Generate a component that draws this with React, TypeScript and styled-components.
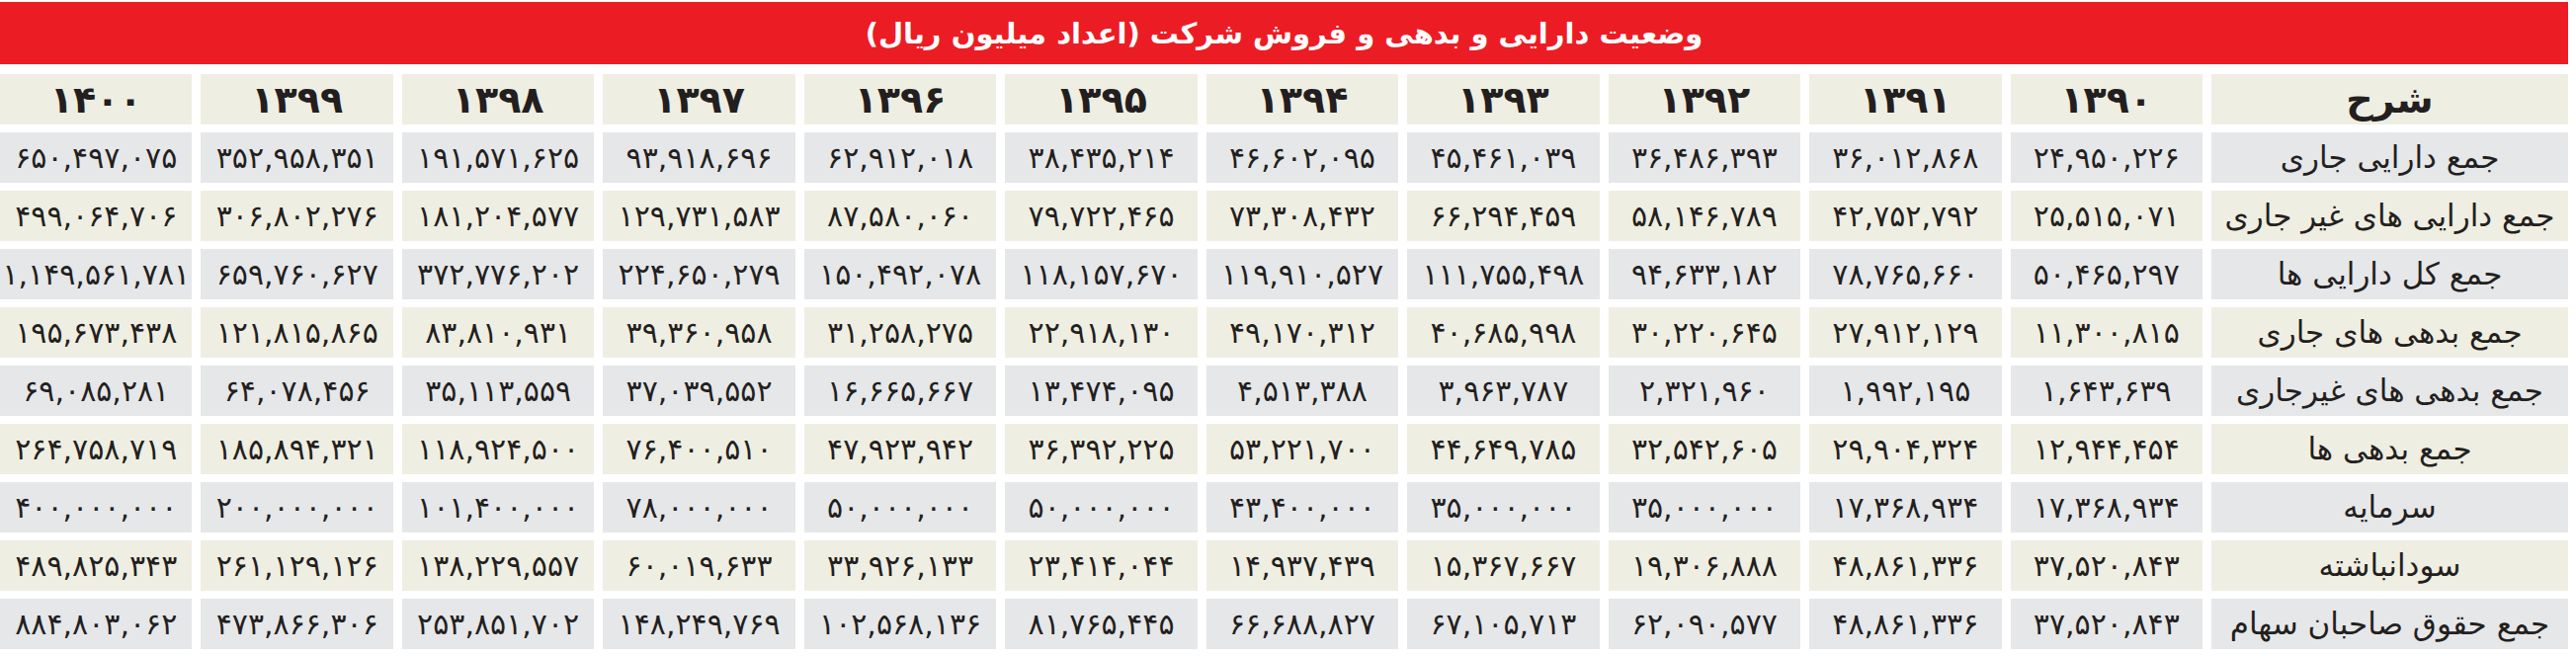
import React from "react";
import styled, { createGlobalStyle } from "styled-components";

const GlobalStyle = createGlobalStyle`
    body {
        margin: 0;
        background: #ffffff;
        font-family: "DejaVu Sans", "Noto Sans", sans-serif;
    }
`;

const Page = styled.div`
    width: 2599px;
    padding-top: 2px;
    direction: rtl;
    color: #231f20;
`;

const TitleBar = styled.div`
    height: 63px;
    background: #ec1c24;
    display: flex;
    align-items: center;
    justify-content: center;
    color: #ffffff;
    font-size: 29px;
    font-weight: bold;
    margin-bottom: 10px;
`;

const Table = styled.div`
    display: grid;
    grid-template-columns: 361px repeat(11, 1fr);
    grid-auto-rows: 51px;
    column-gap: 9px;
    row-gap: 8px;
`;

const Cell = styled.div<{ $tone: "beige" | "gray" }>`
    background: ${({ $tone }) => ($tone === "beige" ? "#efeee2" : "#e6e7e9")};
    display: flex;
    align-items: center;
    justify-content: center;
    white-space: nowrap;
    line-height: 1;
    overflow: hidden;
`;

const HeadCell = styled(Cell)`
    font-size: 38px;
    font-weight: bold;
`;

const LabelCell = styled(Cell)`
    font-size: 31px;
`;

const NumCell = styled(Cell)`
    font-size: 30px;
`;

const years = [1390, 1391, 1392, 1393, 1394, 1395, 1396, 1397, 1398, 1399, 1400];

// values are in Latin digits, shown as Persian digits
const rows: { label: string; values: string[] }[] = [
    {
        label: "جمع دارایی جاری",
        values: ["24,950,226", "36,012,868", "36,486,393", "45,461,039", "46,602,095", "38,435,214", "62,912,018", "93,918,696", "191,571,625", "352,958,351", "650,497,075"],
    },
    {
        label: "جمع دارایی های غیر جاری",
        values: ["25,515,071", "42,752,792", "58,146,789", "66,294,459", "73,308,432", "79,722,465", "87,580,060", "129,731,583", "181,204,577", "306,802,276", "499,064,706"],
    },
    {
        label: "جمع کل دارایی ها",
        values: ["50,465,297", "78,765,660", "94,633,182", "111,755,498", "119,910,527", "118,157,670", "150,492,078", "224,650,279", "372,776,202", "659,760,627", "1,149,561,781"],
    },
    {
        label: "جمع بدهی های جاری",
        values: ["11,300,815", "27,912,129", "30,220,645", "40,685,998", "49,170,312", "22,918,130", "31,258,275", "39,360,958", "83,810,931", "121,815,865", "195,673,438"],
    },
    {
        label: "جمع بدهی های غیرجاری",
        values: ["1,643,639", "1,992,195", "2,321,960", "3,963,787", "4,513,388", "13,474,095", "16,665,667", "37,039,552", "35,113,559", "64,078,456", "69,085,281"],
    },
    {
        label: "جمع بدهی ها",
        values: ["12,944,454", "29,904,324", "32,542,605", "44,649,785", "53,221,700", "36,392,225", "47,923,942", "76,400,510", "118,924,500", "185,894,321", "264,758,719"],
    },
    {
        label: "سرمایه",
        values: ["17,368,934", "17,368,934", "35,000,000", "35,000,000", "43,400,000", "50,000,000", "50,000,000", "78,000,000", "101,400,000", "200,000,000", "400,000,000"],
    },
    {
        label: "سودانباشته",
        values: ["37,520,843", "48,861,336", "19,306,888", "15,367,667", "14,937,439", "23,414,044", "33,926,133", "60,019,633", "138,229,557", "261,129,126", "489,825,343"],
    },
    {
        label: "جمع حقوق صاحبان سهام",
        values: ["37,520,843", "48,861,336", "62,090,577", "67,105,713", "66,688,827", "81,765,445", "102,568,136", "148,249,769", "253,851,702", "473,866,306", "884,803,062"],
    },
];

const fa = (s: string | number) =>
    String(s).replace(/[0-9]/g, (d) => "۰۱۲۳۴۵۶۷۸۹"[Number(d)]);

const App = () => {
    return (
        <>
            <GlobalStyle />
            <Page>
                <TitleBar>وضعیت دارایی و بدهی و فروش شرکت (اعداد میلیون ریال)</TitleBar>
                <Table>
                    <HeadCell $tone="beige">شرح</HeadCell>
                    {years.map((y) => (
                        <HeadCell key={y} $tone="beige">{fa(y)}</HeadCell>
                    ))}
                    {rows.map((row, i) => {
                        const tone = i % 2 === 0 ? "gray" : "beige";
                        return (
                            <React.Fragment key={row.label}>
                                <LabelCell $tone={tone}>{row.label}</LabelCell>
                                {row.values.map((v, j) => (
                                    <NumCell key={j} $tone={tone}>{fa(v)}</NumCell>
                                ))}
                            </React.Fragment>
                        );
                    })}
                </Table>
            </Page>
        </>
    );
};

export default App;
